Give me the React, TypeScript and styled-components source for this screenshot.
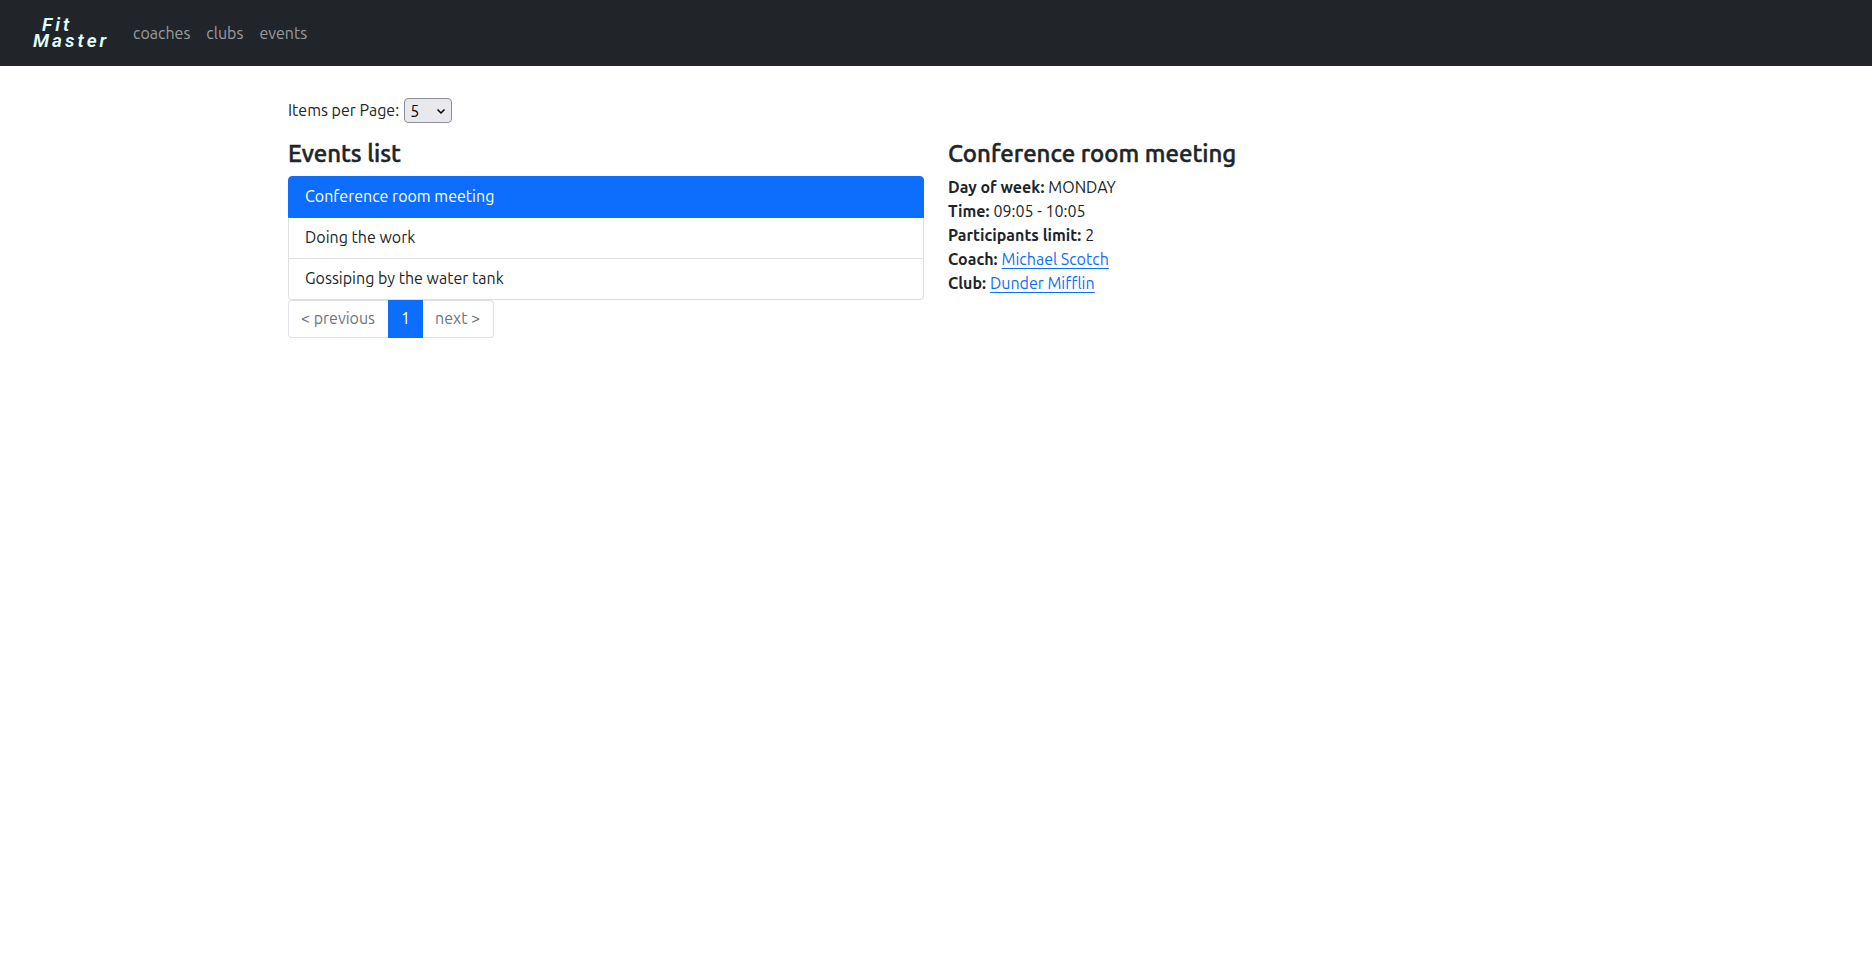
import React, { useState } from "react";
import styled, { createGlobalStyle } from "styled-components";

const GlobalStyle = createGlobalStyle`
  *, *::before, *::after { box-sizing: border-box; }
  body {
    margin: 0;
    background: #fff;
    color: #212529;
    font-family: Ubuntu, "Noto Sans", sans-serif;
    font-size: 16px;
    line-height: 24px;
  }
`;

const Navbar = styled.nav`
  display: flex;
  align-items: center;
  gap: 16px;
  height: 66px;
  padding: 0 32px;
  background: #212529;
`;

const Brand = styled.a`
  display: flex;
  flex-direction: column;
  width: 85px;
  padding-left: 1px;
  color: #e0ffff;
  font: italic 600 19px/16px Roboto, sans-serif;
  letter-spacing: 3px;
  text-decoration: none;
`;

const BrandTop = styled.span`
  padding-left: 9px;
`;

const NavLink = styled.a`
  color: rgba(255, 255, 255, 0.55);
  text-decoration: none;
`;

const Container = styled.main`
  width: 100%;
  max-width: 1320px;
  margin: 0 auto;
  padding: 32px 12px;
`;

const PageSize = styled.div`
  display: flex;
  align-items: flex-start;
  gap: 5px;
  margin-bottom: 16px;
`;

const SelectBox = styled.span`
  display: grid;
  align-items: center;

  > * { grid-area: 1 / 1; }
`;

const Select = styled.select`
  width: 48px;
  height: 25px;
  padding: 0 5px;
  border: 1px solid #8f8f9d;
  border-radius: 4px;
  background: #e9e9ed;
  color: #000;
  font: inherit;
  line-height: 22px;
  appearance: none;
`;

const Chevron = styled.svg`
  justify-self: end;
  margin-right: 6px;
  pointer-events: none;
`;

const Columns = styled.div`
  display: grid;
  grid-template-columns: 1fr 1fr;
  gap: 24px;
`;

const Title = styled.h4`
  margin: 0 0 8px;
  font-size: 24px;
  font-weight: 500;
  line-height: 29px;
  -webkit-text-stroke: 0.02em currentColor;
`;

const List = styled.ul`
  margin: 0;
  padding: 0;
  list-style: none;
`;

const ItemButton = styled.button<{ $active: boolean }>`
  display: block;
  width: 100%;
  padding: 7px 16px 9px;
  border: 1px solid ${(p) => (p.$active ? "#0d6efd" : "#dfdfdf")};
  background: ${(p) => (p.$active ? "#0d6efd" : "#fff")};
  color: ${(p) => (p.$active ? "#fff" : "#212529")};
  font: inherit;
  text-align: left;

  li:first-child > & { border-radius: 4px 4px 0 0; }
  li + li > & { border-top: 0; }
  li:last-child > & { border-radius: 0 0 4px 4px; }
`;

const Pagination = styled.nav`
  display: flex;
`;

const PageButton = styled.button<{ $active?: boolean }>`
  padding: 5px 12px 7px;
  border: 1px solid ${(p) => (p.$active ? "#0d6efd" : "#dee2e6")};
  background: ${(p) => (p.$active ? "#0d6efd" : "#fff")};
  color: ${(p) => (p.$active ? "#fff" : "#6c757d")};
  font: inherit;

  &:first-child { padding-right: 13px; border-right: 0; border-radius: 4px 0 0 4px; }
  &:last-child { padding-right: 13px; border-left: 0; border-radius: 0 4px 4px 0; }
`;

const Details = styled.dl`
  margin: -1px 0 0;
`;

const Detail = styled.div`
  display: flex;
  gap: 4px;

  dt { font-weight: 700; }
  dd { margin: 0; }
`;

const TextLink = styled.a`
  color: #0d6efd;
  text-decoration: underline;
  text-decoration-thickness: 1px;
  text-underline-offset: 3px;
  text-decoration-skip-ink: none;
`;

const events = ["Conference room meeting", "Doing the work", "Gossiping by the water tank"];

export default function App() {
  const [selected, setSelected] = useState(0);
  return (
    <>
      <GlobalStyle />
      <Navbar>
        <Brand href="#">
          <BrandTop>Fit</BrandTop>
          <span>Master</span>
        </Brand>
        <NavLink href="#coaches">coaches</NavLink>
        <NavLink href="#clubs">clubs</NavLink>
        <NavLink href="#events">events</NavLink>
      </Navbar>
      <Container>
        <PageSize>
          <label htmlFor="page-size">Items per Page:</label>
          <SelectBox>
            <Select id="page-size" defaultValue="5">
              <option>5</option>
              <option>10</option>
              <option>15</option>
            </Select>
            <Chevron width="10" height="8" viewBox="0 0 10 8" aria-hidden="true">
              <path d="M1.5 2.5 5 6l3.5-3.5" fill="none" stroke="#000" strokeWidth="1.5" />
            </Chevron>
          </SelectBox>
        </PageSize>
        <Columns>
          <section>
            <Title>Events list</Title>
            <List>
              {events.map((name, i) => (
                <li key={name}>
                  <ItemButton $active={i === selected} onClick={() => setSelected(i)}>
                    {name}
                  </ItemButton>
                </li>
              ))}
            </List>
            <Pagination aria-label="Events pages">
              <PageButton>&lt; previous</PageButton>
              <PageButton $active>1</PageButton>
              <PageButton>next &gt;</PageButton>
            </Pagination>
          </section>
          <section>
            <Title>{events[selected]}</Title>
            <Details>
              <Detail><dt>Day of week:</dt><dd>MONDAY</dd></Detail>
              <Detail><dt>Time:</dt><dd>09:05 - 10:05</dd></Detail>
              <Detail><dt>Participants limit:</dt><dd>2</dd></Detail>
              <Detail><dt>Coach:</dt><dd><TextLink href="#coach">Michael Scotch</TextLink></dd></Detail>
              <Detail><dt>Club:</dt><dd><TextLink href="#club">Dunder Mifflin</TextLink></dd></Detail>
            </Details>
          </section>
        </Columns>
      </Container>
    </>
  );
}
